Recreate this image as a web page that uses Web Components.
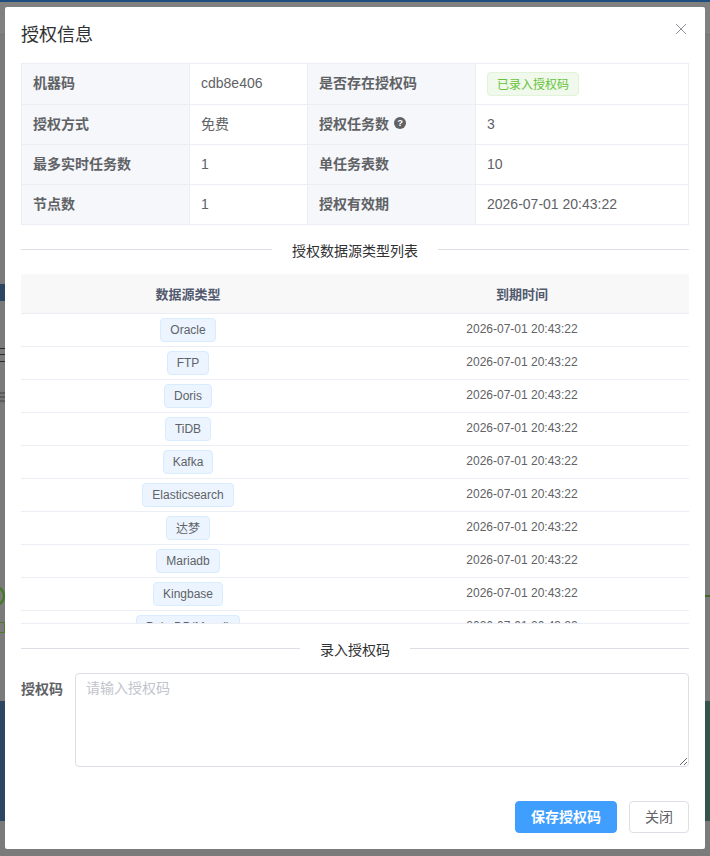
<!DOCTYPE html>
<html lang="zh">
<head>
<meta charset="utf-8">
<title>授权信息</title>
<style>
  html, body { margin: 0; height: 100%; overflow: hidden; }
  body { font-family: "Liberation Sans", "Noto Sans CJK SC", sans-serif; color: #606266; }
</style>
</head>
<body>
<license-page>
  <license-dialog heading="授权信息">
    <info-table></info-table>
    <title-divider>授权数据源类型列表</title-divider>
    <source-table></source-table>
    <title-divider second>录入授权码</title-divider>
    <code-form></code-form>
    <app-button slot="footer" primary>保存授权码</app-button>
    <app-button slot="footer">关闭</app-button>
  </license-dialog>
</license-page>

<script>
class LicensePage extends HTMLElement {
  constructor() {
    super();
    this.attachShadow({ mode: 'open' });
    this.shadowRoot.innerHTML = `
<style>
  :host { display: block; position: relative; width: 710px; height: 856px; overflow: hidden; background: #7b7b7b; }
  .back { display: flex; flex-direction: column; height: 100%; }
  .top { height: 2px; background: #1e4d80; }
  .head { height: 32px; background: #808080; border-bottom: 1px solid #747474; }
  .gap-a { height: 249px; }
  .blue-a { height: 17px; width: 5px; background: #2c4661; }
  .gap-b { height: 400px; }
  .foot { height: 120px; display: flex; justify-content: space-between; }
  .foot i { display: block; width: 5px; background: #2c4661; }
  .foot i + i { background: #35544b; }
  /* bits of the page behind the mask */
  .bit { position: absolute; }
  .ring { left: -17px; top: 585px; width: 22px; height: 22px; box-sizing: border-box; border: 2px solid #3f7a1e; border-radius: 50%; }
  .mark { left: 0; top: 622px; width: 5px; height: 11px; box-sizing: border-box; border: 1px solid #4f7a2a; border-left: 0; }
  .line { right: 0; top: 595px; width: 5px; height: 2px; background: #3f6a20; }
  .dash { left: 0; width: 5px; height: 1px; background: #2a2a2a; }
  .blur { left: 0; top: 392px; width: 5px; height: 12px; background: repeating-linear-gradient(#5c5c5c 0 2px, #777 2px 4px); }
</style>
<div class="back">
  <div class="top"></div>
  <div class="head"></div>
  <div class="gap-a"></div>
  <div class="blue-a"></div>
  <div class="gap-b"></div>
  <div class="foot"><i></i><i></i></div>
</div>
<div class="bit ring"></div>
<div class="bit mark"></div>
<div class="bit line"></div>
<div class="bit dash" style="top:348px"></div>
<div class="bit dash" style="top:354px"></div>
<div class="bit dash" style="top:361px"></div>
<div class="bit blur"></div>
<slot></slot>`;
  }
}

class LicenseDialog extends HTMLElement {
  constructor() {
    super();
    this.attachShadow({ mode: 'open' });
    this.shadowRoot.innerHTML = `
<style>
  :host { display: block; position: absolute; left: 5px; top: 7px; width: 700px; height: 842px; background: #fff; border-radius: 2px; box-sizing: border-box; padding: 0 16px; }
  .title { height: 56px; display: flex; align-items: center; font-size: 18px; color: #303133; padding-bottom: 4px; box-sizing: border-box; }
  .close { position: absolute; top: 15px; right: 17px; width: 14px; height: 14px; }
  .foot { position: absolute; right: 16px; bottom: 16px; display: flex; gap: 12px; }
</style>
<div class="title">${this.getAttribute('heading')}</div>
<svg class="close" viewBox="0 0 14 14" fill="none" stroke="#909399" stroke-width="1"><path d="M2 2L12 12M12 2L2 12"/></svg>
<slot></slot>
<div class="foot"><slot name="footer"></slot></div>`;
  }
}

const infoRows = [
  ['机器码', 'cdb8e406', '是否存在授权码', '<span class="ok">已录入授权码</span>'],
  ['授权方式', '<span class="up">免费</span>', '授权任务数 <svg class="help" viewBox="0 0 14 14"><circle cx="7" cy="7" r="7" fill="#606266"/><text x="7" y="11" text-anchor="middle" font-size="11" font-weight="700" fill="#fff">?</text></svg>', '3'],
  ['最多实时任务数', '1', '单任务表数', '10'],
  ['节点数', '1', '授权有效期', '2026-07-01 20:43:22']
];

class InfoTable extends HTMLElement {
  constructor() {
    super();
    this.attachShadow({ mode: 'open' });
    const cells = infoRows.map(r => r.map((c, i) =>
      `<div class="${i % 2 ? 'val' : 'key'}">${c}</div>`).join('')).join('');
    this.shadowRoot.innerHTML = `
<style>
  :host { display: grid; grid-template-columns: 167px 117px 167px 1fr; grid-template-rows: 40px 39px 39px 39px; gap: 1px; padding: 1px; background: #ebeef5; font-size: 14px; color: #606266; height: 162px; box-sizing: border-box; width: 668px; }
  .key, .val { display: flex; align-items: center; padding: 0 11px; }
  .key { background: #f5f7fa; font-weight: 700; padding-bottom: 4px; }
  .val { background: #fff; padding-bottom: 2px; }
  .up { margin-bottom: 2px; }
  .ok { display: inline-flex; align-items: center; height: 24px; margin-bottom: -2px; box-sizing: border-box; padding: 0 9px 2px; font-size: 12px; color: #67c23a; background: #f0f9eb; border: 1px solid #e1f3d8; border-radius: 4px; }
  .help { width: 12px; height: 12px; margin-left: 5px; }
</style>${cells}`;
  }
}

class TitleDivider extends HTMLElement {
  constructor() {
    super();
    this.attachShadow({ mode: 'open' });
    this.shadowRoot.innerHTML = `
<style>
  :host { display: flex; align-items: center; gap: 20px; margin-top: 24px; height: 1px; font-size: 14px; color: #303133; white-space: nowrap; }
  i { flex: 1; height: 1px; background: #dcdfe6; }
</style>
<i></i><span><slot></slot></span><i></i>`;
  }
}

const sources = ['Oracle', 'FTP', 'Doris', 'TiDB', 'Kafka', 'Elasticsearch', '达梦', 'Mariadb', 'Kingbase', 'PolarDB(Mysql)'];

class SourceTable extends HTMLElement {
  constructor() {
    super();
    this.attachShadow({ mode: 'open' });
    const rows = sources.map(s => `
<div class="row"><div><span class="tag${/^[a-z]/i.test(s) ? '' : ' cjk'}">${s}</span></div><div class="time">2026-07-01 20:43:22</div></div>`).join('');
    this.shadowRoot.innerHTML = `
<style>
  :host { display: block; height: 350px; margin-top: 24px; overflow: hidden; border-bottom: 1px solid #ebeef5; font-size: 12px; color: #606266; box-sizing: border-box; }
  .head, .row { display: grid; grid-template-columns: 1fr 1fr; border-bottom: 1px solid #ebeef5; }
  .head { height: 40px; box-sizing: border-box; background: #f8f8f9; font-size: 13px; font-weight: 700; color: #515a6e; }
  .row { height: 33px; box-sizing: border-box; }
  .head div, .row div { display: flex; align-items: center; justify-content: center; }
  .row .time { padding-bottom: 2px; }
  .tag { display: inline-flex; align-items: center; height: 24px; box-sizing: border-box; padding: 0 9px; background: #ecf5ff; border: 1px solid #d9ecff; border-radius: 4px; }
  .cjk { padding-bottom: 2px; }
</style>
<div class="head"><div>数据源类型</div><div>到期时间</div></div>${rows}`;
  }
}

class CodeForm extends HTMLElement {
  constructor() {
    super();
    this.attachShadow({ mode: 'open' });
    this.shadowRoot.innerHTML = `
<style>
  :host { display: flex; gap: 12px; margin-top: 24px; font-size: 14px; color: #606266; }
  label { width: 42px; font-weight: 700; padding-top: 8px; line-height: 16px; }
  textarea { flex: 1; height: 94px; box-sizing: border-box; margin: 0; padding: 4px 10px; border: 1px solid #dcdfe6; border-radius: 4px; font: inherit; line-height: 20px; color: inherit; outline: none; resize: both; }
  textarea::placeholder { color: #c0c4cc; opacity: 1; }
</style>
<label>授权码</label>
<textarea placeholder="请输入授权码"></textarea>`;
  }
}

class AppButton extends HTMLElement {
  constructor() {
    super();
    this.attachShadow({ mode: 'open' });
    this.shadowRoot.innerHTML = `
<style>
  :host { display: inline-flex; align-items: center; justify-content: center; height: 32px; box-sizing: border-box; padding: 0 15px 2px; font-size: 14px; color: #606266; background: #fff; border: 1px solid #dcdfe6; border-radius: 4px; }
  :host([primary]) { color: #fff; background: #409eff; border-color: #409eff; font-weight: 700; }
</style>
<slot></slot>`;
  }
}

customElements.define('license-page', LicensePage);
customElements.define('license-dialog', LicenseDialog);
customElements.define('info-table', InfoTable);
customElements.define('title-divider', TitleDivider);
customElements.define('source-table', SourceTable);
customElements.define('code-form', CodeForm);
customElements.define('app-button', AppButton);
</script>
</body>
</html>
